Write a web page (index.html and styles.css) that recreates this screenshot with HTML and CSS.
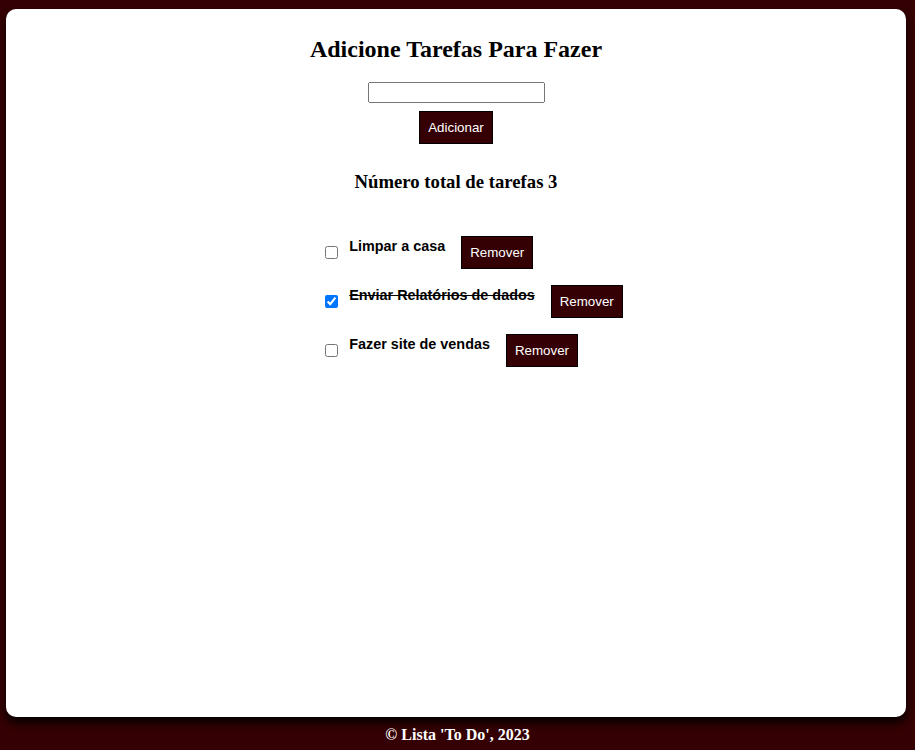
FILE: index.html
```html
<!DOCTYPE html>
<html lang="pt-BR">
<head>
<meta charset="utf-8">
<title>Lista To Do</title>
<link rel="stylesheet" href="styles.css">
</head>
<body>
<main class="card">
  <h2 class="title">Adicione Tarefas Para Fazer</h2>
  <input class="task-input" type="text">
  <button class="btn btn-add">Adicionar</button>
  <h3 class="total">Número total de tarefas 3</h3>
  <ul class="task-list">
    <li class="task">
      <input class="task-check" type="checkbox">
      <span class="task-label">Limpar a casa</span>
      <button class="btn">Remover</button>
    </li>
    <li class="task">
      <input class="task-check" type="checkbox" checked>
      <span class="task-label done">Enviar Relatórios de dados</span>
      <button class="btn">Remover</button>
    </li>
    <li class="task">
      <input class="task-check" type="checkbox">
      <span class="task-label">Fazer site de vendas</span>
      <button class="btn">Remover</button>
    </li>
  </ul>
</main>
<footer class="footer">© Lista 'To Do', 2023</footer>
</body>
</html>
```

FILE: styles.css
```css
html, body {
  margin: 0;
  padding: 0;
}
body {
  background: #350003;
  font-family: "Liberation Serif", "Times New Roman", serif;
  height: 750px;
  overflow: hidden;
}
.card {
  box-sizing: border-box;
  height: 708px;
  margin: 9px 9px 0 6px;
  background: #fff;
  border-radius: 10px;
  box-shadow: 0 6px 10px rgba(0, 0, 0, 0.9);
  display: flex;
  flex-direction: column;
  align-items: center;
  padding-top: 27px;
}
.title {
  font-size: 24px;
  font-weight: bold;
  margin: 0 0 19px;
}
.task-input {
  box-sizing: border-box;
  width: 177px;
  height: 21px;
  margin: 0 0 8px;
  font-family: "Liberation Sans", Arial, sans-serif;
}
.btn {
  background: #350003;
  color: #fff;
  border: 1px solid #000;
  padding: 8px;
  font-family: "Liberation Sans", Arial, sans-serif;
  font-size: 13.33px;
  line-height: 15px;
  cursor: pointer;
}
.total {
  font-size: 18.72px;
  font-weight: bold;
  margin: 27px 0 43px;
}
.task-list {
  list-style: none;
  margin: 0;
  padding: 0 8px 0 40px;
  display: flex;
  flex-direction: column;
  gap: 16px;
  align-self: center;
}
.task {
  display: flex;
  align-items: center;
}
.task-check {
  margin: 3px 3px 3px 4px;
  width: 13px;
  height: 13px;
}
.task-label {
  font-family: "Liberation Sans", Arial, sans-serif;
  font-weight: bold;
  font-size: 14.4px;
  margin: 0 16px 13px 8px;
}
.task-label.done {
  text-decoration: line-through;
}
.footer {
  height: 33px;
  padding-top: 3px;
  box-sizing: border-box;
  display: flex;
  align-items: center;
  justify-content: center;
  color: #fff;
  font-weight: bold;
  font-size: 16px;
}
```
